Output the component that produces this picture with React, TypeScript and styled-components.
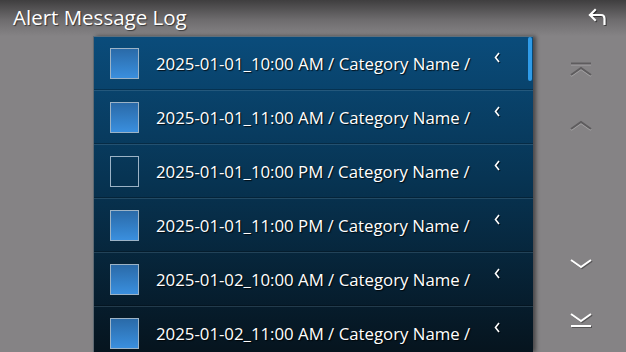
import { createGlobalStyle, styled } from "styled-components";

interface IEntry {
  id: number;
  stamp: string;
  checked: boolean;
}

const entries: IEntry[] = [
  { id: 1, stamp: "2025-01-01_10:00 AM", checked: true },
  { id: 2, stamp: "2025-01-01_11:00 AM", checked: true },
  { id: 3, stamp: "2025-01-01_10:00 PM", checked: false },
  { id: 4, stamp: "2025-01-01_11:00 PM", checked: true },
  { id: 5, stamp: "2025-01-02_10:00 AM", checked: true },
  { id: 6, stamp: "2025-01-02_11:00 AM", checked: true },
];

const GlobalStyle = createGlobalStyle`
  html, body {
    margin: 0;
    padding: 0;
    background: #858385;
    overflow: hidden;
  }
  * {
    box-sizing: border-box;
  }
`;

const Screen = styled.div`
  width: 626px;
  height: 352px;
  display: grid;
  grid-template-rows: 36px 1fr;
  background: linear-gradient(
    to bottom,
    #3f3e3f 0px,
    #6e6c6e 20px,
    #858385 36px,
    #858385 100%
  );
  font-family: "Open Sans", "Noto Sans", sans-serif;
  overflow: hidden;
`;

const Header = styled.div`
  display: flex;
  align-items: center;
  justify-content: space-between;
  padding: 0 16px 2px 13px;
`;

const Title = styled.h1`
  margin: 0;
  font-size: 20.5px;
  font-weight: 500;
  color: #ffffff;
  text-shadow: 1px 1px 1px rgba(0, 0, 0, 0.55);
`;

const BackButton = styled.button`
  width: 24px;
  height: 24px;
  padding: 0;
  border: none;
  background: none;
  display: flex;
  align-items: center;
  justify-content: center;
  filter: drop-shadow(1px 1px 0 rgba(0, 0, 0, 0.5));
`;

const Body = styled.div`
  display: grid;
  grid-template-columns: 93px 440px 93px;
  min-height: 0;
`;

const Panel = styled.div`
  position: relative;
  background: linear-gradient(to bottom, #0a4c7b 0%, #073453 45%, #06141e 100%);
  border-top: 1px solid #5e6f7c;
  border-left: 1px solid #5f6a73;
  box-shadow: 3px 0 4px rgba(0, 0, 0, 0.45);
  overflow: hidden;
`;

const Row = styled.div`
  height: 54px;
  display: flex;
  align-items: center;
  padding-left: 16px;
  border-bottom: 1px solid rgba(120, 150, 170, 0.25);
  box-shadow: inset 0 -1px 0 rgba(0, 0, 0, 0.25);
`;

const Check = styled.div<{ $checked: boolean }>`
  width: 29px;
  height: 31px;
  flex: none;
  border: 1.5px solid #9cb3c6;
  background: ${({ $checked }) =>
    $checked ? "linear-gradient(to bottom, #2a6aa8, #3a8fde)" : "transparent"};
`;

const Label = styled.span`
  margin-left: 17px;
  flex: 1;
  font-size: 16.8px;
  color: #ffffff;
  white-space: nowrap;
  text-shadow: 1px 1px 1px rgba(0, 0, 0, 0.8);
`;

const Expand = styled.div`
  display: flex;
  width: 10px;
  margin-right: 29px;
  align-self: flex-start;
  margin-top: 15px;
  filter: drop-shadow(1px 1px 0 rgba(0, 0, 0, 0.6));
`;

const ScrollThumb = styled.div`
  position: absolute;
  top: 0;
  right: 1px;
  width: 4px;
  height: 44px;
  border-radius: 2px;
  background: #2f9be8;
`;

const Side = styled.div`
  display: flex;
  flex-direction: column;
  justify-content: space-between;
  padding: 7px 0 6px;
`;

const NavGroup = styled.div`
  display: flex;
  flex-direction: column;
`;

const NavButton = styled.button<{ $enabled: boolean }>`
  height: 54px;
  padding: 0 0 0 2px;
  border: none;
  background: none;
  display: flex;
  align-items: center;
  justify-content: center;
  color: ${({ $enabled }) => ($enabled ? "#ffffff" : "#5e5c5e")};
  filter: ${({ $enabled }) =>
    $enabled
      ? "drop-shadow(1px 1px 0 rgba(0,0,0,0.35))"
      : "drop-shadow(0 1px 0 rgba(180,178,180,0.7))"};
`;

function BackIcon() {
  return (
    <svg width="22" height="20" viewBox="0 0 22 20" fill="none">
      <path
        d="M8 3 L3 8 L8 13 M3 8 H14 Q17.5 8 17.5 11.5 V17"
        stroke="#ffffff"
        strokeWidth="2.2"
        strokeLinecap="square"
      />
    </svg>
  );
}

function ChevronLeft() {
  return (
    <svg width="6" height="11" viewBox="0 0 6 11" fill="none">
      <path d="M5 1 L1.5 5.5 L5 10" stroke="#ffffff" strokeWidth="1.6" />
    </svg>
  );
}

function NavIcon({ dir, edge }: { dir: "up" | "down"; edge: boolean }) {
  const chevron = dir === "up" ? "M1 13 L11 6 L21 13" : "M1 3 L11 10 L21 3";
  const line = dir === "up" ? "M1 1.5 H21" : "M1 15 H21";
  return (
    <svg width="22" height="16" viewBox="0 0 22 16" fill="none">
      <path d={chevron} stroke="currentColor" strokeWidth="2" />
      {edge && <path d={line} stroke="currentColor" strokeWidth="2" />}
    </svg>
  );
}

function App() {
  return (
    <>
      <GlobalStyle />
      <Screen>
        <Header>
          <Title>Alert Message Log</Title>
          <BackButton>
            <BackIcon />
          </BackButton>
        </Header>
        <Body>
          <div />
          <Panel>
            {entries.map((entry) => (
              <Row key={entry.id}>
                <Check $checked={entry.checked} />
                <Label>{entry.stamp} / Category Name /</Label>
                <Expand>
                  <ChevronLeft />
                </Expand>
              </Row>
            ))}
            <ScrollThumb />
          </Panel>
          <Side>
            <NavGroup>
              <NavButton $enabled={false}>
                <NavIcon dir="up" edge />
              </NavButton>
              <NavButton $enabled={false}>
                <NavIcon dir="up" edge={false} />
              </NavButton>
            </NavGroup>
            <NavGroup>
              <NavButton $enabled>
                <NavIcon dir="down" edge={false} />
              </NavButton>
              <NavButton $enabled>
                <NavIcon dir="down" edge />
              </NavButton>
            </NavGroup>
          </Side>
        </Body>
      </Screen>
    </>
  );
}

export default App;
